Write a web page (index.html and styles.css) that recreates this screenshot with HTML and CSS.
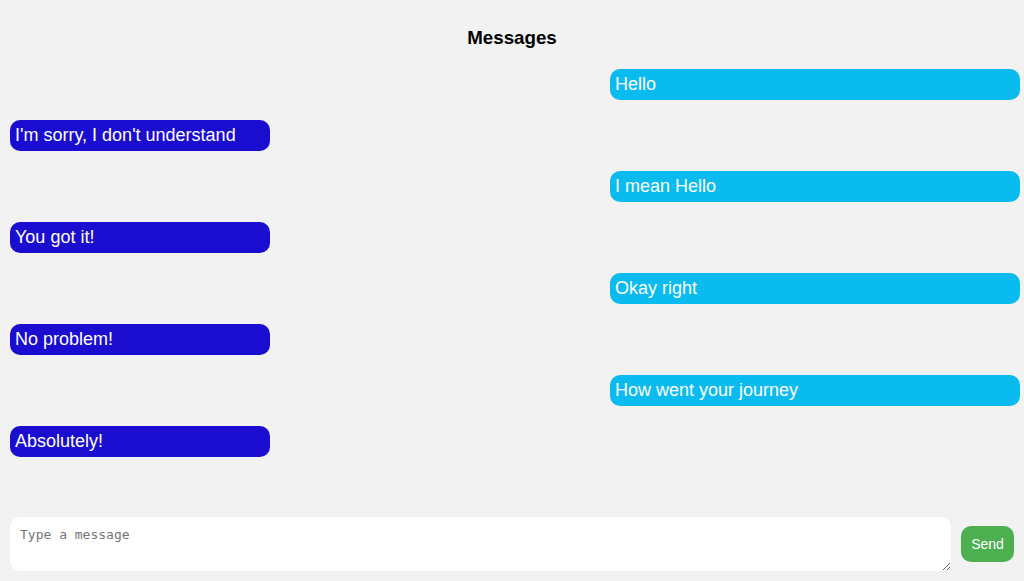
FILE: index.html
```html
<!DOCTYPE html>
<html>
<head>
<meta charset="utf-8">
<title>Messages</title>
<link rel="stylesheet" href="styles.css">
</head>
<body>
<div class="app">
  <h3 class="title">Messages</h3>
  <div class="messages">
    <div class="msg sent">Hello</div>
    <div class="msg received">I'm sorry, I don't understand</div>
    <div class="msg sent">I mean Hello</div>
    <div class="msg received">You got it!</div>
    <div class="msg sent">Okay right</div>
    <div class="msg received">No problem!</div>
    <div class="msg sent">How went your journey</div>
    <div class="msg received">Absolutely!</div>
  </div>
  <div class="composer">
    <textarea class="input" placeholder="Type a message"></textarea>
    <button class="send">Send</button>
  </div>
</div>
</body>
</html>
```

FILE: styles.css
```css
html, body {
  margin: 0;
  padding: 0;
  background: #f2f2f2;
}

body {
  font-family: "Liberation Sans", Arial, sans-serif;
}

.app {
  height: 100vh;
  display: flex;
  flex-direction: column;
}

.title {
  margin: 27px 0 20px;
  font-size: 18.72px;
  line-height: 22px;
  font-weight: bold;
  text-align: center;
  color: #000;
}

.messages {
  flex: 1;
  display: flex;
  flex-direction: column;
  gap: 20px;
}

.msg {
  box-sizing: border-box;
  padding: 5px;
  font-size: 18px;
  line-height: 21px;
  color: #fff;
  border-radius: 10px;
}

.sent {
  align-self: flex-end;
  width: 410px;
  margin-right: 4px;
  background: #0abbef;
}

.received {
  align-self: flex-start;
  width: 260px;
  margin-left: 10px;
  background: #1a0dcf;
}

.composer {
  display: flex;
  align-items: center;
  gap: 10px;
  padding: 0 10px 10px;
}

.input {
  flex: 1;
  box-sizing: border-box;
  height: 54px;
  border: none;
  border-radius: 10px;
  background: #fff;
  padding: 10px;
  margin: 0;
  font-family: "DejaVu Sans Mono", monospace;
  font-size: 13px;
  outline: none;
}

.input::placeholder {
  color: #757575;
}

.send {
  box-sizing: border-box;
  width: 53px;
  height: 36px;
  border: none;
  border-radius: 10px;
  background: #4caf50;
  color: #fff;
  font-family: "Liberation Sans", Arial, sans-serif;
  font-size: 14px;
  padding: 0;
}
```
